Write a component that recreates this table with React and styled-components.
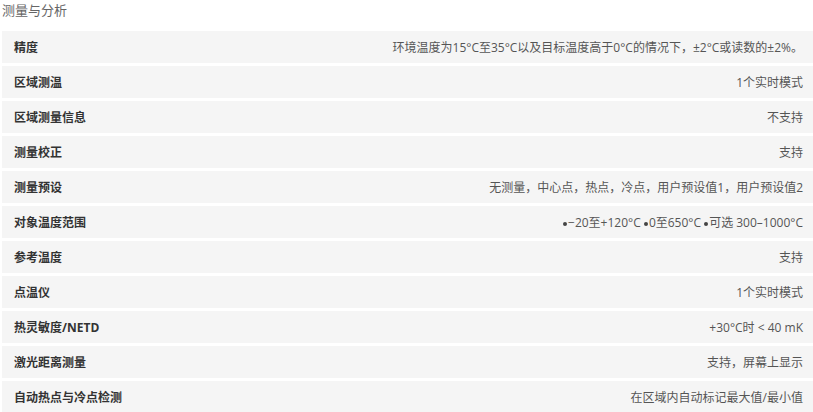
import React from "react";
import styled, { createGlobalStyle } from "styled-components";

const Global = createGlobalStyle`
  html, body { margin: 0; padding: 0; background: #fff; overflow: hidden; }
  body { font-family: "Open Sans", "Noto Sans CJK SC", sans-serif; }
`;

const Wrap = styled.div`
  padding: 2px 0 0 2px;
  width: 820px;
`;

const Title = styled.div`
  font-size: 13px;
  line-height: 17px;
  color: #666;
  height: 17px;
  margin-bottom: 12px;
`;

const List = styled.div`
  display: flex;
  flex-direction: column;
  gap: 3px;
`;

const Row = styled.div`
  display: flex;
  align-items: center;
  justify-content: space-between;
  height: 32px;
  background: #f5f5f5;
  padding: 0 19px 0 12px;
  font-size: 12px;
`;

const Label = styled.span`
  font-weight: bold;
  color: #333;
`;

const Value = styled.span`
  color: #555;
  white-space: pre;
`;

const Bullet = styled.span`
  display: inline-block;
  width: 4px;
  height: 4px;
  border-radius: 50%;
  background: #444;
  margin: 0 1px 0 0;
  vertical-align: middle;
`;

const rows = [
  ["精度", "环境温度为15°C至35°C以及目标温度高于0°C的情况下，±2°C或读数的±2%。"],
  ["区域测温", "1个实时模式"],
  ["区域测量信息", "不支持"],
  ["测量校正", "支持"],
  ["测量预设", "无测量，中心点，热点，冷点，用户预设值1，用户预设值2"],
  ["对象温度范围", null],
  ["参考温度", "支持"],
  ["点温仪", "1个实时模式"],
  ["热灵敏度/NETD", "+30°C时 < 40 mK"],
  ["激光距离测量", "支持，屏幕上显示"],
  ["自动热点与冷点检测", "在区域内自动标记最大值/最小值"],
];

const ranges = ["−20至+120°C ", "0至650°C ", "可选 300–1000°C"];

export default function App() {
  return (
    <>
      <Global />
      <Wrap>
        <Title>测量与分析</Title>
        <List>
          {rows.map(([l, v]) => (
            <Row key={l}>
              <Label>{l}</Label>
              <Value>
                {v !== null
                  ? v
                  : ranges.map((r) => (
                      <React.Fragment key={r}>
                        <Bullet />
                        {r}
                      </React.Fragment>
                    ))}
              </Value>
            </Row>
          ))}
        </List>
      </Wrap>
    </>
  );
}
